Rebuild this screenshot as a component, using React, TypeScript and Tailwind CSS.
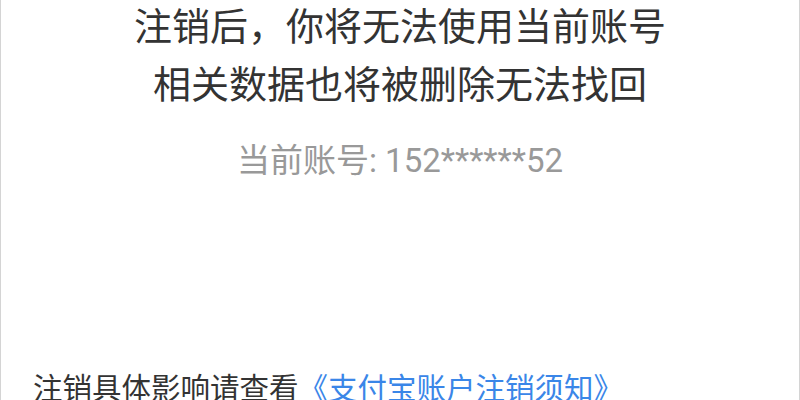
export default function App() {
  return (
    <div
      className="flex h-[400px] w-[800px] flex-col overflow-hidden border-x border-[#d4d4d4] bg-white"
      style={{ fontFamily: 'Roboto, "Noto Sans CJK SC", sans-serif' }}
    >
      {/* Warning text */}
      <div className="-mt-[2px] text-center text-[38px] leading-[58px] text-[#333333]">
        <p>注销后，你将无法使用当前账号</p>
        <p>相关数据也将被删除无法找回</p>
      </div>

      <p className="mt-[23px] text-center text-[33px] leading-[48px] text-[#999999]">
        当前账号: 152******52
      </p>

      {/* Notice link */}
      <p className="mt-[184px] whitespace-nowrap pl-[32px] text-[29.5px] leading-[40px] text-[#333333]">
        注销具体影响请查看<span className="text-[#3a86e8]">《支付宝账户注销须知》</span>
      </p>
    </div>
  );
}
